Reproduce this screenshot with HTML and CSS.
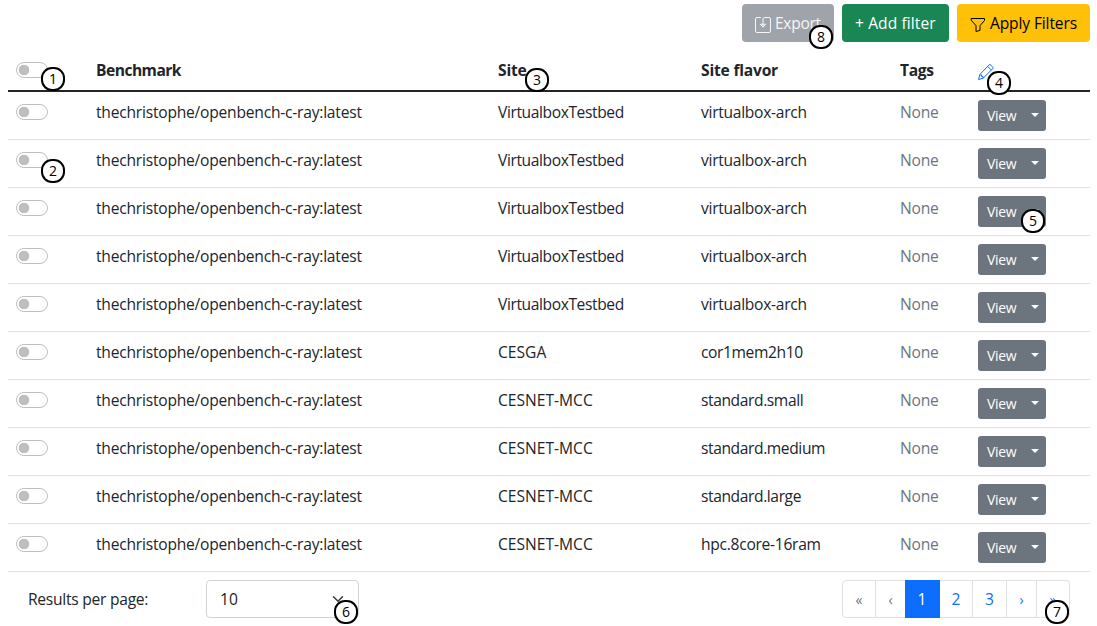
FILE: index.html
```html
<!DOCTYPE html>
<html lang="en">
<head>
<meta charset="utf-8">
<title>Benchmark results</title>
<link rel="stylesheet" href="styles.css">
</head>
<body>
<main class="page">
  <div class="toolbar">
    <button class="btn btn-export"><svg class="icon" viewBox="0 0 16 16"><path d="M5.500 .5H2A1.500 1.500 0 0 0 .5 2v12A1.500 1.500 0 0 0 2 15.500h12a1.500 1.500 0 0 0 1.500-1.500V2A1.500 1.500 0 0 0 14 .5H9.500A1.500 1.500 0 0 0 8 2v8M5.500 7.500L8 10l2.500-2.500z"/></svg><span class="export-label">Export</span></button>
    <button class="btn btn-add"><span class="add-label">+ Add filter</span></button>
    <button class="btn btn-apply"><svg class="icon" viewBox="0 0 16 16"><path d="M1.500 1.500h13v2L10 8.700v4.700L6 14.500V8.700L1.500 3.500z"/></svg><span class="apply-label">Apply Filters</span></button>
  </div>
  <table class="results">
    <colgroup><col class="c-check"><col class="c-bench"><col class="c-site"><col class="c-flavor"><col class="c-tags"><col class="c-action"></colgroup>
    <thead>
      <tr><th><i class="switch"></i></th><th><span class="h-bench">Benchmark</span></th><th><span class="h-site">Site</span></th><th><span class="h-flavor">Site flavor</span></th><th><span class="h-tags">Tags</span></th><th><svg class="icon pencil" viewBox="0 0 16 16"><path d="M12.100.5l3.400 3.400L5.200 14.200.500 15.500l1.300-4.700zM10 2.700L13.300 6M2.300 10.900h1.200v1.500H5v1.400"/></svg></th></tr>
    </thead>
    <tbody id="rows"></tbody>
  </table>
  <footer class="footer">
    <span class="per-page">Results per page:</span>
    <div class="select"><span>10</span><svg class="chevron" viewBox="0 0 16 16"><path d="M2 5l6 6 6-6"/></svg></div>
    <nav class="pagination"><a class="off w1 arrow">«</a><a class="off w2 arrow">‹</a><a class="active">1</a><a class="w3">2</a><a class="w4">3</a><a class="w2 arrow">›</a><a class="w5 arrow">»</a></nav>
  </footer>
  <b class="marker m1">1</b><b class="marker m2">2</b><b class="marker m3">3</b><b class="marker m4">4</b><b class="marker m5">5</b><b class="marker m6">6</b><b class="marker m7">7</b><b class="marker m8">8</b>
</main>
<script src="rows.js"></script>
</body>
</html>
```
FILE: styles.css
```css
* { box-sizing: border-box; }
body { margin: 0; background: #fff; color: #212529; font: 15.6px/24px "Open Sans", "Noto Sans", sans-serif; white-space: nowrap; }
.page { position: relative; width: 1097px; height: 626px; padding: 4px 7px 0 8px; overflow: hidden; }
.toolbar { display: flex; justify-content: flex-end; gap: 8px; height: 46px; }
.btn { display: flex; align-items: center; height: 38px; padding: 0 0 0 13px; border: 0; border-radius: 4px; font: inherit; text-align: left; }
.btn .icon { margin: 3px 4px 0 0; }
.btn-export { width: 92px; background: #9fa4aa; color: #f4f5f6; }
.btn-add { width: 107px; background: #198754; color: #fff; }
.btn-apply { width: 133px; background: #ffc107; color: #000; }
.export-label { letter-spacing: -.3px; }
.add-label { letter-spacing: .08px; }
.apply-label { letter-spacing: -.14px; }
.icon { display: block; flex: none; width: 16px; height: 16px; fill: none; stroke: currentColor; stroke-width: 1; stroke-linejoin: round; stroke-linecap: round; }
.results { width: 1082px; table-layout: fixed; border-collapse: separate; border-spacing: 0; }
.c-check { width: 80px; }
.c-bench { width: 402px; }
.c-site { width: 203px; }
.c-flavor { width: 199px; }
.c-tags { width: 78px; }
.c-action { width: 120px; }
.results th { height: 42px; padding: 8px; border-bottom: 2px solid #212529; text-align: left; vertical-align: top; font-weight: 700; }
.results td { height: 48px; padding: 8px 8px 7px; border-bottom: 1px solid #dee2e6; vertical-align: top; }
.h-bench { letter-spacing: -.52px; }
.h-site { letter-spacing: -.2px; }
.h-flavor { letter-spacing: -.2px; }
.h-tags { letter-spacing: -.3px; }
.bench { letter-spacing: -.22px; }
.narrow { letter-spacing: -.4px; }
.medium { letter-spacing: -.28px; }
.wide { letter-spacing: 0; }
.switch { display: block; width: 32px; height: 16px; margin-top: 4px; border: 1px solid #bfbfbf; border-radius: 8px; background: radial-gradient(circle at 7px 7px, #bfbfbf 5px, transparent 5.600px); }
.pencil { margin: 6px 0 0; color: #0d6efd; }
.muted { color: #6c757d; letter-spacing: -.2px; }
.view { display: flex; align-items: center; width: 68px; height: 31px; padding-left: 9px; border-radius: 3px; background: #6c757d; color: #fff; font-size: 14px; line-height: 21px; letter-spacing: -.35px; }
.view::after { content: ""; margin: -1px 7px 0 auto; border: 4px solid transparent; border-top-color: #fff; border-bottom: 0; }
.footer { display: flex; align-items: center; height: 38px; margin-top: 8px; padding: 0 20px; }
.per-page { width: 178px; letter-spacing: -.26px; }
.select { display: flex; align-items: center; justify-content: space-between; width: 153px; height: 38px; padding: 0 12px 0 13px; border: 1px solid #ced4da; border-radius: 4px; }
.chevron { width: 16px; height: 12px; fill: none; stroke: #343a40; stroke-width: 2; stroke-linecap: round; }
.pagination { display: flex; margin-left: auto; height: 38px; }
.pagination a { display: flex; align-items: center; justify-content: center; border: 1px solid #dee2e6; border-left-width: 0; color: #0d6efd; }
.pagination .off { color: #6c757d; }
.pagination .arrow { padding-top: 1px; font-size: 14px; }
.pagination .active { width: 35px; border-color: #0d6efd; background: #0d6efd; color: #fff; }
.pagination .w1 { width: 34px; border-left-width: 1px; border-radius: 4px 0 0 4px; }
.pagination .w2 { width: 30px; }
.pagination .off.w2 { width: 29px; border-right: 0; }
.pagination .w3 { width: 33px; }
.pagination .w4 { width: 34px; }
.pagination .w5 { width: 33px; border-radius: 0 4px 4px 0; }
.marker { position: absolute; width: 24px; height: 24px; border: 2px solid #000; border-radius: 11px; background: #fff; color: #000; font: 14px/20px "Open Sans", sans-serif; text-align: center; }
.m1 { left: 41px; top: 67px; }
.m2 { left: 41px; top: 159px; }
.m3 { left: 525px; top: 68px; }
.m4 { left: 987px; top: 71px; }
.m5 { left: 1021px; top: 209px; }
.m6 { left: 334px; top: 600px; }
.m7 { left: 1045px; top: 600px; }
.m8 { left: 809px; top: 25px; }
```
FILE: rows.js
```js
const data = [
  ...Array(5).fill(["VirtualboxTestbed", "virtualbox-arch", "narrow", "medium"]),
  ["CESGA", "cor1mem2h10", "wide", "narrow"],
  ["CESNET-MCC", "standard.small", "wide", "narrow"],
  ["CESNET-MCC", "standard.medium", "wide", "narrow"],
  ["CESNET-MCC", "standard.large", "wide", "narrow"],
  ["CESNET-MCC", "hpc.8core-16ram", "wide", "medium"]
];
document.getElementById("rows").innerHTML = data.map(([site, flavor, siteFit, flavorFit]) =>
  `<tr><td><i class="switch"></i></td><td><span class="bench">thechristophe/openbench-c-ray:latest</span></td><td><span class="${siteFit}">${site}</span></td><td><span class="${flavorFit}">${flavor}</span></td><td><span class="muted">None</span></td><td><div class="view"><span class="view-label">View</span></div></td></tr>`
).join("");
```
